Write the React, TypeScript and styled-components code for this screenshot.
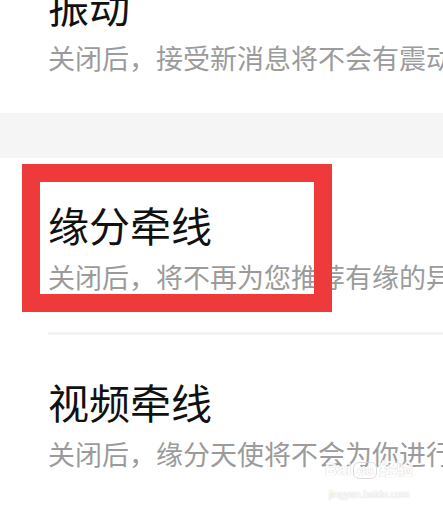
import styled, { createGlobalStyle } from 'styled-components'

const GlobalStyle = createGlobalStyle`
  html, body {
    margin: 0;
    padding: 0;
    background: #ffffff;
    overflow: hidden;
  }
  body {
    font-family: "Noto Sans CJK SC", "Noto Sans", sans-serif;
  }
`

const Page = styled.div`
  position: relative;
  width: 443px;
  height: 505px;
  overflow: hidden;
  background: #ffffff;
`

const List = styled.div`
  display: flex;
  flex-direction: column;
  margin-top: -61px;
`

const Item = styled.div<{ $divider?: boolean }>`
  position: relative;
  display: flex;
  flex-direction: column;
  padding: 42px 0 0 48px;
  height: 174px;
  box-sizing: border-box;
  white-space: nowrap;

  &::after {
    content: '';
    display: ${({ $divider }) => ($divider ? 'block' : 'none')};
    position: absolute;
    left: 48px;
    right: 0;
    bottom: -3px;
    height: 3px;
    background: #f3f3f3;
  }
`

const Title = styled.div`
  font-size: 41px;
  line-height: 48px;
  color: #111111;
`

const Subtitle = styled.div`
  margin-top: 11px;
  font-size: 27px;
  line-height: 36px;
  color: #9b9b9b;
`

const Band = styled.div`
  height: 45px;
  background: #f5f5f5;
`

const Spacer = styled.div`
  height: 3px;
`

const Highlight = styled.div`
  position: absolute;
  left: 22px;
  top: 6px;
  width: 310px;
  height: 148px;
  box-sizing: border-box;
  border: 18px solid #ee3a3a;
  pointer-events: none;
`

const Watermark = styled.div`
  position: absolute;
  left: 325px;
  top: 460px;
  display: flex;
  flex-direction: column;
  align-items: center;
  font-family: "Liberation Sans", "Noto Sans CJK SC", sans-serif;
  color: #ffffff;
  text-shadow: 0 0 1px #cfcfcf, 0 0 1px #cfcfcf;
  opacity: 0.85;
`

const Brand = styled.div`
  display: flex;
  align-items: center;
  gap: 2px;
  font-size: 17px;
  font-weight: 700;
  line-height: 20px;
`

const Paw = styled.span`
  display: inline-block;
  padding: 0 3px;
  border-radius: 6px;
  border: 1px solid #d8d8d8;
  font-size: 13px;
  line-height: 15px;
`

const Site = styled.div`
  font-size: 10px;
  line-height: 14px;
  margin-top: 8px;
`

const items = [
  { title: '振动', desc: '关闭后，接受新消息将不会有震动' },
  { title: '缘分牵线', desc: '关闭后，将不再为您推荐有缘的异性' },
  { title: '视频牵线', desc: '关闭后，缘分天使将不会为你进行视频牵线' },
]

export default function App() {
  return (
    <>
      <GlobalStyle />
      <Page>
        <List>
          <Item>
            <Title>{items[0].title}</Title>
            <Subtitle>{items[0].desc}</Subtitle>
          </Item>
          <Band />
          <Item $divider>
            <Title>{items[1].title}</Title>
            <Subtitle>{items[1].desc}</Subtitle>
            <Highlight />
          </Item>
          <Spacer />
          <Item>
            <Title>{items[2].title}</Title>
            <Subtitle>{items[2].desc}</Subtitle>
          </Item>
        </List>
        <Watermark>
          <Brand>
            Bai<Paw>du</Paw>经验
          </Brand>
          <Site>jingyan.baidu.com</Site>
        </Watermark>
      </Page>
    </>
  )
}
